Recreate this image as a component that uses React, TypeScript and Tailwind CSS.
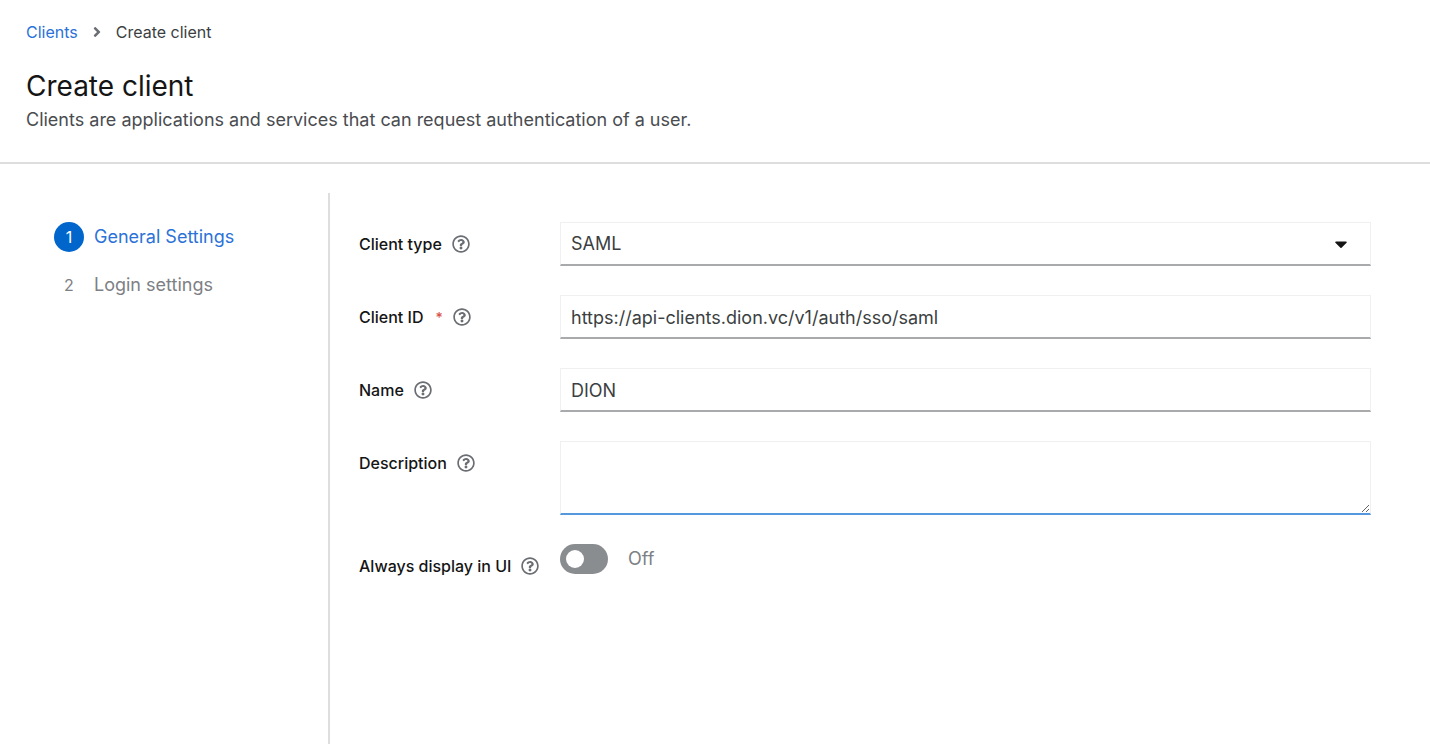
import { useState, ReactNode } from "react";
import { FaAngleRight, FaCaretDown, FaRegQuestionCircle } from "react-icons/fa";

const steps = ["General Settings", "Login settings"];

const control =
  "block w-full border border-b-2 border-[#f0f0f0] bg-white px-2.5 text-lg text-[#3c3f42] outline-none focus:border-b-[#0066cc]";

type RowProps = {
  id: string;
  label: string;
  required?: boolean;
  children: ReactNode;
};

function Row({ id, label, required, children }: RowProps) {
  return (
    <div className="grid grid-cols-[201px_minmax(0,1fr)] items-start">
      <div className="flex items-center gap-2.5 pt-2.5">
        <label htmlFor={id} className="whitespace-nowrap text-base font-medium text-[#151515]">
          {label}
          {required && <span className="ml-3 text-sm text-[#d9534a]">*</span>}
        </label>
        <button type="button" aria-label={`Help for ${label}`} className="text-[#6a6e73]">
          <FaRegQuestionCircle className="size-4.5" />
        </button>
      </div>
      <div>{children}</div>
    </div>
  );
}

export default function App() {
  const [step, setStep] = useState(0);
  const [clientType, setClientType] = useState("SAML");
  const [clientId, setClientId] = useState("https://api-clients.dion.vc/v1/auth/sso/saml");
  const [name, setName] = useState("DION");
  const [description, setDescription] = useState("");
  const [alwaysDisplay, setAlwaysDisplay] = useState(false);

  return (
    <div className="flex min-h-screen flex-col bg-white pb-1 font-['Inter',sans-serif] text-[#151515]">
      <header className="border-b-2 border-[#dedede] px-6.5 pt-5 pb-7.5">
        <nav aria-label="Breadcrumb">
          <ol className="flex items-center text-base">
            <li>
              <a href="#clients" className="text-[#2b72d8]">
                Clients
              </a>
            </li>
            <li className="flex items-center">
              <FaAngleRight className="mx-[11px] size-4 text-[#6a6e73]" />
              <span className="text-[#3c3f42]">Create client</span>
            </li>
          </ol>
        </nav>
        <h1 className="mt-5 text-[28px] leading-11">Create client</h1>
        <p className="text-lg leading-6 text-[#4a4c50]">
          Clients are applications and services that can request authentication of a user.
        </p>
      </header>

      <main className="mt-[29px] flex grow">
        <nav aria-label="Steps" className="w-[330px] shrink-0 border-r-2 border-[#dedede] px-[54px] pt-[29px]">
          <ol className="flex flex-col gap-[18px]">
            {steps.map((label, i) => (
              <li key={label}>
                <button
                  type="button"
                  onClick={() => setStep(i)}
                  className={`flex items-center gap-2.5 text-lg ${step === i ? "text-[#2b72d8]" : "text-[#7d8084]"}`}
                >
                  <span
                    className={`flex size-7.5 items-center justify-center rounded-full text-base ${
                      step === i ? "bg-[#0066cc] text-white" : ""
                    }`}
                  >
                    {i + 1}
                  </span>
                  {label}
                </button>
              </li>
            ))}
          </ol>
        </nav>

        <form className="flex min-w-0 grow flex-col gap-[29px] pt-[29px] pr-[59px] pl-[29px]">
          <Row id="client-type" label="Client type">
            <div className="relative">
              <select
                id="client-type"
                value={clientType}
                onChange={(e) => setClientType(e.target.value)}
                className={`${control} h-11 appearance-none border-b-[#a8aaac]`}
              >
                <option>SAML</option>
                <option>OpenID Connect</option>
              </select>
              <FaCaretDown className="pointer-events-none absolute top-3 right-5 size-5" />
            </div>
          </Row>
          <Row id="client-id" label="Client ID" required>
            <input
              id="client-id"
              type="text"
              value={clientId}
              onChange={(e) => setClientId(e.target.value)}
              className={`${control} h-11 border-b-[#a8aaac] pt-0.5`}
            />
          </Row>
          <Row id="name" label="Name">
            <input
              id="name"
              type="text"
              value={name}
              onChange={(e) => setName(e.target.value)}
              className={`${control} h-11 border-b-[#a8aaac] pt-0.5`}
            />
          </Row>
          <Row id="description" label="Description">
            <textarea
              id="description"
              value={description}
              onChange={(e) => setDescription(e.target.value)}
              className={`${control} h-[74px] resize-y border-b-[#5598dd]`}
            />
          </Row>
          <Row id="always-display" label="Always display in UI">
            <div className="flex items-center gap-5">
              <input
                id="always-display"
                type="checkbox"
                role="switch"
                checked={alwaysDisplay}
                onChange={(e) => setAlwaysDisplay(e.target.checked)}
                className="h-7.5 w-12 appearance-none rounded-full bg-[#8a8d90] p-1.5 before:block before:size-4.5 before:rounded-full before:bg-white checked:bg-[#0066cc] checked:before:ml-auto"
              />
              <span className="text-lg text-[#7d8084]">{alwaysDisplay ? "On" : "Off"}</span>
            </div>
          </Row>
        </form>
      </main>
    </div>
  );
}
